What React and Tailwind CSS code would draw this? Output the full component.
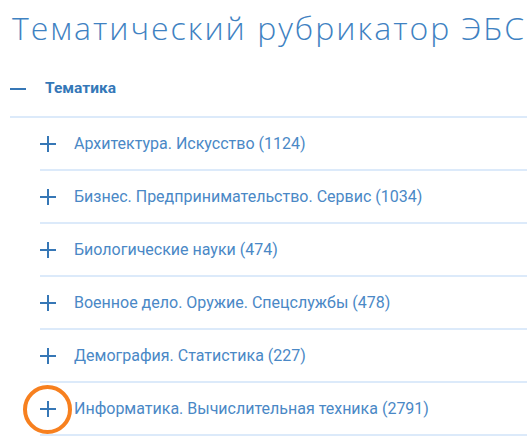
import React from 'react';

const items = [
  'Архитектура. Искусство (1124)',
  'Бизнес. Предпринимательство. Сервис (1034)',
  'Биологические науки (474)',
  'Военное дело. Оружие. Спецслужбы (478)',
  'Демография. Статистика (227)',
  'Информатика. Вычислительная техника (2791)',
];

const Plus = () => (
  <svg width="16" height="16" viewBox="0 0 16 16" className="shrink-0">
    <path d="M0 8H16M8 0V16" stroke="#3677b6" strokeWidth="2" />
  </svg>
);

const App = () => {
  return (
    <div className="w-[527px] h-[438px] overflow-hidden bg-white pl-[10px] font-['Roboto',sans-serif]">
      <h1 className="pt-[8px] pl-[2px] text-[32px] leading-[40px] font-light text-[#3f82c2] whitespace-nowrap tracking-[2px] font-['Open_Sans',sans-serif]">
        Тематический рубрикатор ЭБС
      </h1>

      <div className="mt-[14px] flex items-center h-[56px] border-b-2 border-[#dceafa]">
        <svg width="16" height="2" viewBox="0 0 16 2" className="shrink-0">
          <path d="M0 1H16" stroke="#3677b6" strokeWidth="2" />
        </svg>
        <span className="ml-[19px] text-[15.5px] font-bold text-[#3478b8]">Тематика</span>
      </div>

      <ul className="pl-[30px]">
        {items.map((item, i) => (
          <li
            key={item}
            className="relative flex items-center h-[53px] border-b-2 border-[#dceafa]"
          >
            <Plus />
            <span className="ml-[18px] text-[16px] text-[#4a88c6] whitespace-nowrap">{item}</span>
            {i === items.length - 1 && (
              <span className="absolute left-[-17px] top-[2px] w-[49px] h-[49px] rounded-full border-4 border-[#f7801f]" />
            )}
          </li>
        ))}
      </ul>
    </div>
  );
};

export default App;
